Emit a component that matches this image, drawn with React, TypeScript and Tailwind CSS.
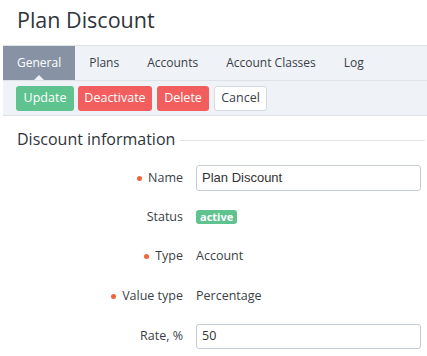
import React from "react";

const Dot = () => <span className="inline-block w-[5px] h-[5px] rounded-full bg-[#f0643a] mr-[6px]" />;

function Row({ label, required, children, className = "" }: { label: string; required?: boolean; children: React.ReactNode; className?: string }) {
  return (
    <div className={"flex items-center h-[26px] " + className}>
      <div className="w-[183px] flex items-center justify-end text-[12.5px] text-[#3a3f47]">
        {required && <Dot />}
        <span>{label}</span>
      </div>
      <div className="ml-[13px] flex-1 pr-[6px] flex items-center">{children}</div>
    </div>
  );
}

export default function App() {
  const tabs = ["General", "Plans", "Accounts", "Account Classes", "Log"];
  return (
    <div className="w-[427px] h-[356px] bg-white overflow-hidden" style={{ fontFamily: '"Open Sans", sans-serif' }}>
      <div className="h-[45px] pl-[17px] pt-[5px] text-[21.5px] leading-[30px] text-[#2f343b]">Plan Discount</div>
      <div className="ml-[3px] bg-[#eff2f6] border-t border-[#dfe3e8]">
        <div className="flex h-[35px] border-b border-[#dfe3e8]">
          {tabs.map((t, i) => (
            <div
              key={t}
              className={
                "relative px-[14px] flex items-center text-[12px] " +
                (i === 0 ? "bg-[#8892a5] text-white" : "text-[#3a3f47]")
              }
            >
              {t}
              {i === 0 && (
                <span className="absolute bottom-0 left-1/2 -translate-x-1/2 w-0 h-0 border-l-[5px] border-r-[5px] border-b-[5px] border-l-transparent border-r-transparent border-b-[#eff2f6]" />
              )}
            </div>
          ))}
        </div>
        <div className="flex gap-[4px] pl-[13px] pt-[5px] h-[35px] border-b border-[#dfe3e8]">
          <button className="h-[25px] w-[58px] rounded-[3px] bg-[#5ec38f] text-white text-[12.5px]">Update</button>
          <button className="h-[25px] w-[74px] rounded-[3px] bg-[#f25e5e] text-white text-[12.5px]">Deactivate</button>
          <button className="h-[25px] w-[52px] ml-[1px] rounded-[3px] bg-[#f25e5e] text-white text-[12.5px]">Delete</button>
          <button className="h-[25px] w-[53px] ml-[1px] rounded-[3px] bg-white border border-[#d5dae0] text-[#3a3f47] text-[12.5px]">Cancel</button>
        </div>
      </div>
      <div className="flex items-center pl-[17px] pr-[2px] mt-[12px]">
        <span className="text-[16px] leading-[22px] text-[#2f343b]">Discount information</span>
        <span className="flex-1 h-px bg-[#dfe3e8] ml-[5px] mt-[2px]" />
      </div>
      <Row label="Name" required className="mt-[15px]">
        <div className="w-full h-[26px] border border-[#c6ccd4] rounded-[3px] flex items-center px-[5px] text-[13px] text-[#333]" style={{ fontFamily: '"Liberation Sans", Arial, sans-serif' }}>
          Plan Discount
        </div>
      </Row>
      <Row label="Status" className="mt-[13px]">
        <span className="h-[14px] px-[4px] rounded-[3px] bg-[#5ec38f] text-white text-[11px] font-bold leading-[14px]">active</span>
      </Row>
      <Row label="Type" required className="mt-[13px]">
        <span className="text-[12.5px] text-[#3a3f47]">Account</span>
      </Row>
      <Row label="Value type" required className="mt-[14px]">
        <span className="text-[12.5px] text-[#3a3f47]">Percentage</span>
      </Row>
      <Row label="Rate, %" className="mt-[14px]">
        <div className="w-full h-[25px] border border-[#c6ccd4] rounded-[3px] flex items-center px-[5px] text-[12.5px] text-[#333]">
          50
        </div>
      </Row>
    </div>
  );
}
